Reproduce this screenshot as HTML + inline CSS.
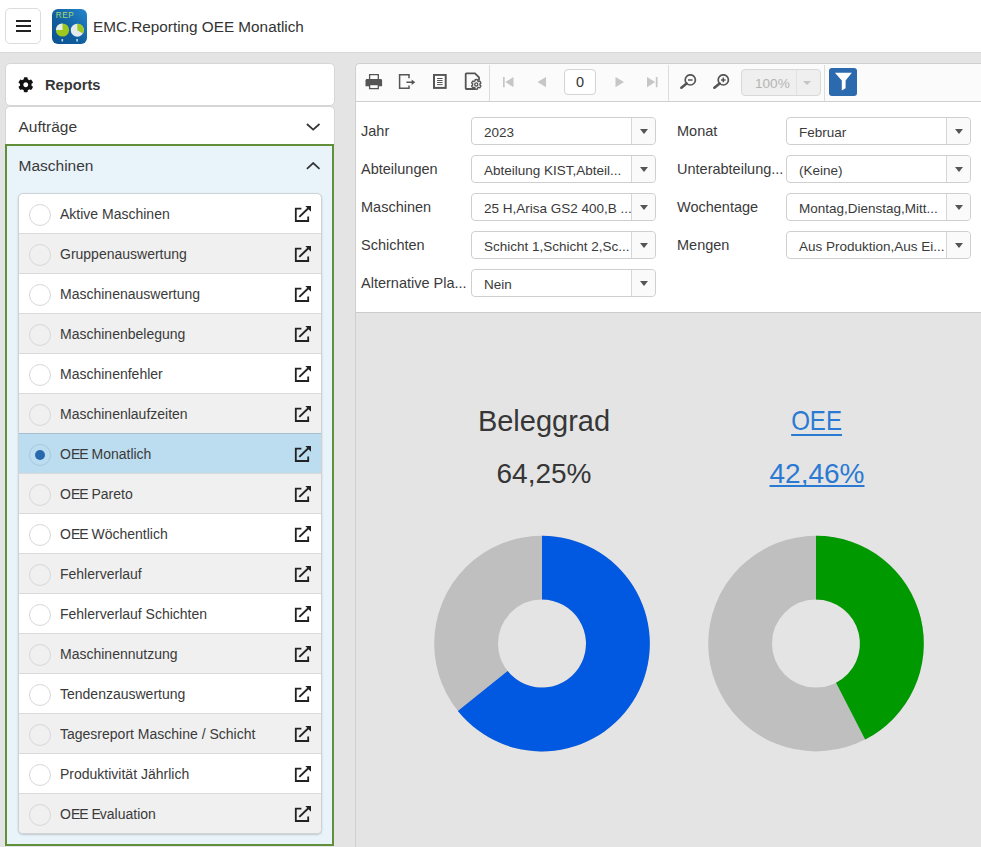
<!DOCTYPE html>
<html><head><meta charset="utf-8">
<style>
*{box-sizing:border-box;margin:0;padding:0}
html,body{width:981px;height:847px;overflow:hidden}
body{position:relative;background:#e4e4e4;font-family:"Liberation Sans",sans-serif;color:#333}
.abs{position:absolute}
#hdr{left:0;top:0;width:981px;height:53px;background:#fff;border-bottom:1px solid #d9d9d9}
#burger{left:5px;top:8px;width:36px;height:36px;border:1px solid #dcdcdc;border-radius:5px;background:#fff}
#burger i{position:absolute;left:10px;width:15px;height:2px;background:#222}
#logo{left:51.5px;top:8.7px;width:35px;height:35px;border-radius:6px;background:linear-gradient(225deg,#2386cc,#0f5c9c 60%,#0c5392)}
#title{left:93px;top:18px;font-size:15.3px;color:#333;white-space:nowrap}
.panel{background:#fff;border:1px solid #d6d6d6}
#rep{left:5px;top:63px;width:330px;height:43px;border-radius:5px}
#auf{left:5px;top:106px;width:330px;height:40px;border-radius:5px 5px 0 0}
#masch{left:5px;top:144px;width:329px;height:702px;border:2px solid #62903a;background:#e9f3fa}
#mgreenbot{display:none}
.ptxt{font-size:15.5px;color:#3a3a3a;white-space:nowrap}
#list{left:18px;top:193px;width:304px;height:641px;background:#fff;border:1px solid #cfd3d6;border-radius:5px;box-shadow:0 1px 2px rgba(0,0,0,.18);overflow:hidden}
.it{position:relative;height:40px;border-bottom:1px solid #dadada;font-size:14px;color:#3a3a3a;white-space:nowrap}
.it:nth-child(even){background:#f0f0f0}
.it.sel{background:#bcdcf0}
.it:last-child{border-bottom:0}
.rd{position:absolute;left:10px;top:10px;width:22px;height:22px;border:1.4px solid #d8d8d8;border-radius:50%}
.it.sel .rd{border-color:#a9c8dc}
.it.sel .rd:after{content:"";position:absolute;left:5px;top:5px;width:10px;height:10px;border-radius:50%;background:#2868ad}
.lt{position:absolute;left:41px;top:12.3px}
.e{letter-spacing:-1px}
.ext{position:absolute;left:275px;top:11px;width:18px;height:18px}
#rp{left:355px;top:63px;width:640px;height:800px;background:#e4e4e4;border-left:1px solid #cfcfcf;border-top:1px solid #cfcfcf;border-radius:5px 0 0 0;overflow:hidden}
#tb{left:0;top:0;width:640px;height:38px;background:#fbfbfb;border-bottom:1px solid #d0d0d0}
#form{left:0;top:38px;width:640px;height:211px;background:#fff;border-bottom:1px solid #cccccc}
.lbl{position:absolute;font-size:14.5px;color:#3a3a3a;white-space:nowrap}
.inp{position:absolute;width:185px;height:28px;border:1px solid #cfcfcf;border-radius:4px;background:#fff}
.inp span{position:absolute;left:12px;top:7px;font-size:13.5px;color:#3a3a3a;white-space:nowrap}
.inp b{position:absolute;right:0;top:0;width:24px;height:26px;border-left:1px solid #d6d6d6;background:#fafafa;border-radius:0 4px 4px 0}
.inp b:after{content:"";position:absolute;left:7.5px;top:11px;border-left:4.5px solid transparent;border-right:4.5px solid transparent;border-top:5px solid #555}
.sep{position:absolute;top:1px;width:1px;height:36px;background:#dcdcdc}
u{text-decoration-thickness:1.5px;text-decoration-skip-ink:none}
</style></head>
<body>
<div id="hdr" class="abs"></div>
<div id="burger" class="abs"><i style="top:11px"></i><i style="top:16px"></i><i style="top:21px"></i></div>
<div id="logo" class="abs">
<svg width="35" height="35" viewBox="0 0 35 35">
<text x="3.8" y="9" font-family="Liberation Sans" font-size="8.2" fill="#a6dc74" letter-spacing="0.6">REP</text>
<circle cx="10.5" cy="21" r="6.6" fill="#9dc91e"/>
<path d="M10.5 21 L3.9 21 A6.6 6.6 0 0 1 10.5 14.4Z" fill="#e8eef0"/>
<circle cx="25.3" cy="21.2" r="6.5" fill="#e2e8ec"/>
<path d="M25.3 21.2 L25.3 14.7 A6.5 6.5 0 0 1 30.9 24.5Z" fill="#9dc91e"/>
<rect x="9.5" y="30" width="1.6" height="2.5" fill="#bcd8f0"/>
<rect x="24.3" y="30" width="1.6" height="2.5" fill="#bcd8f0"/>
</svg>
</div>
<div id="title" class="abs">EMC.Reporting OEE Monatlich</div>

<div id="rep" class="abs panel">
<svg class="abs" style="left:12px;top:13px" width="15.5" height="15.5" viewBox="0 0 512 512"><path fill="#111" d="M487.4 315.7l-42.6-24.6c4.3-23.2 4.3-47 0-70.2l42.6-24.6c4.9-2.8 7.1-8.6 5.5-14-11.1-35.6-30-67.8-54.7-94.6-3.8-4.1-10-5.1-14.8-2.3L380.8 110c-17.9-15.4-38.5-27.3-60.8-35.1V25.8c0-5.6-3.9-10.5-9.4-11.7-36.7-8.2-74.3-7.8-109.2 0-5.5 1.2-9.4 6.1-9.4 11.7V75c-22.2 7.9-42.8 19.8-60.8 35.1L88.7 85.5c-4.9-2.8-11-1.9-14.8 2.3-24.7 26.7-43.6 58.9-54.7 94.6-1.7 5.4.6 11.2 5.5 14L67.3 221c-4.3 23.2-4.3 47 0 70.2l-42.6 24.6c-4.9 2.8-7.1 8.6-5.5 14 11.1 35.6 30 67.8 54.7 94.6 3.8 4.1 10 5.1 14.8 2.3l42.6-24.6c17.9 15.4 38.5 27.3 60.8 35.1v49.2c0 5.6 3.9 10.5 9.4 11.7 36.7 8.2 74.3 7.8 109.2 0 5.5-1.2 9.4-6.1 9.4-11.7v-49.2c22.2-7.9 42.8-19.8 60.8-35.1l42.6 24.6c4.9 2.8 11 1.9 14.8-2.3 24.7-26.7 43.6-58.9 54.7-94.6 1.5-5.5-.7-11.3-5.6-14.1zM256 336c-44.1 0-80-35.9-80-80s35.9-80 80-80 80 35.9 80 80-35.9 80-80 80z"/></svg>
<div class="abs" style="left:39px;top:13px;font-size:14.7px;font-weight:bold;color:#383838">Reports</div>
</div>
<div id="auf" class="abs panel">
<div class="abs ptxt" style="left:12.5px;top:11px">Aufträge</div>
<svg class="abs" style="left:300px;top:16px" width="15" height="9" viewBox="0 0 15 9"><path d="M0.9 1 L7.2 6.6 L13.5 1" fill="none" stroke="#333" stroke-width="1.7"/></svg>
</div>
<div id="masch" class="abs">
<div class="abs ptxt" style="left:11.5px;top:11.3px">Maschinen</div>
<svg class="abs" style="left:299px;top:16px" width="15" height="9" viewBox="0 0 15 9"><path d="M0.9 6.8 L7.2 1 L13.5 6.8" fill="none" stroke="#333" stroke-width="1.7"/></svg>
</div>
<div id="mgreenbot" class="abs"></div>

<div id="list" class="abs">
<div class="it"><div class="rd"></div><div class="lt">Aktive Maschinen</div><svg class="ext" viewBox="0 0 18 18"><path d="M7.4 3.6H1.8V16H14.2V11.4" fill="none" stroke="#222" stroke-width="1.8"/><path d="M5.3 11.9L14.3 3.3" stroke="#222" stroke-width="1.9"/><path d="M11.3 1.1H17V6.8Z" fill="#222"/></svg></div>
<div class="it"><div class="rd"></div><div class="lt">Gruppenauswertung</div><svg class="ext" viewBox="0 0 18 18"><path d="M7.4 3.6H1.8V16H14.2V11.4" fill="none" stroke="#222" stroke-width="1.8"/><path d="M5.3 11.9L14.3 3.3" stroke="#222" stroke-width="1.9"/><path d="M11.3 1.1H17V6.8Z" fill="#222"/></svg></div>
<div class="it"><div class="rd"></div><div class="lt">Maschinenauswertung</div><svg class="ext" viewBox="0 0 18 18"><path d="M7.4 3.6H1.8V16H14.2V11.4" fill="none" stroke="#222" stroke-width="1.8"/><path d="M5.3 11.9L14.3 3.3" stroke="#222" stroke-width="1.9"/><path d="M11.3 1.1H17V6.8Z" fill="#222"/></svg></div>
<div class="it"><div class="rd"></div><div class="lt">Maschinenbelegung</div><svg class="ext" viewBox="0 0 18 18"><path d="M7.4 3.6H1.8V16H14.2V11.4" fill="none" stroke="#222" stroke-width="1.8"/><path d="M5.3 11.9L14.3 3.3" stroke="#222" stroke-width="1.9"/><path d="M11.3 1.1H17V6.8Z" fill="#222"/></svg></div>
<div class="it"><div class="rd"></div><div class="lt">Maschinenfehler</div><svg class="ext" viewBox="0 0 18 18"><path d="M7.4 3.6H1.8V16H14.2V11.4" fill="none" stroke="#222" stroke-width="1.8"/><path d="M5.3 11.9L14.3 3.3" stroke="#222" stroke-width="1.9"/><path d="M11.3 1.1H17V6.8Z" fill="#222"/></svg></div>
<div class="it" style="border-bottom-color:#a6bfcf"><div class="rd"></div><div class="lt">Maschinenlaufzeiten</div><svg class="ext" viewBox="0 0 18 18"><path d="M7.4 3.6H1.8V16H14.2V11.4" fill="none" stroke="#222" stroke-width="1.8"/><path d="M5.3 11.9L14.3 3.3" stroke="#222" stroke-width="1.9"/><path d="M11.3 1.1H17V6.8Z" fill="#222"/></svg></div>
<div class="it sel"><div class="rd"></div><div class="lt">O<span class="e">E</span><span class="e">E</span> Monatlich</div><svg class="ext" viewBox="0 0 18 18"><path d="M7.4 3.6H1.8V16H14.2V11.4" fill="none" stroke="#222" stroke-width="1.8"/><path d="M5.3 11.9L14.3 3.3" stroke="#222" stroke-width="1.9"/><path d="M11.3 1.1H17V6.8Z" fill="#222"/></svg></div>
<div class="it"><div class="rd"></div><div class="lt">O<span class="e">E</span><span class="e">E</span> Pareto</div><svg class="ext" viewBox="0 0 18 18"><path d="M7.4 3.6H1.8V16H14.2V11.4" fill="none" stroke="#222" stroke-width="1.8"/><path d="M5.3 11.9L14.3 3.3" stroke="#222" stroke-width="1.9"/><path d="M11.3 1.1H17V6.8Z" fill="#222"/></svg></div>
<div class="it"><div class="rd"></div><div class="lt">O<span class="e">E</span><span class="e">E</span> Wöchentlich</div><svg class="ext" viewBox="0 0 18 18"><path d="M7.4 3.6H1.8V16H14.2V11.4" fill="none" stroke="#222" stroke-width="1.8"/><path d="M5.3 11.9L14.3 3.3" stroke="#222" stroke-width="1.9"/><path d="M11.3 1.1H17V6.8Z" fill="#222"/></svg></div>
<div class="it"><div class="rd"></div><div class="lt">Fehlerverlauf</div><svg class="ext" viewBox="0 0 18 18"><path d="M7.4 3.6H1.8V16H14.2V11.4" fill="none" stroke="#222" stroke-width="1.8"/><path d="M5.3 11.9L14.3 3.3" stroke="#222" stroke-width="1.9"/><path d="M11.3 1.1H17V6.8Z" fill="#222"/></svg></div>
<div class="it"><div class="rd"></div><div class="lt">Fehlerverlauf Schichten</div><svg class="ext" viewBox="0 0 18 18"><path d="M7.4 3.6H1.8V16H14.2V11.4" fill="none" stroke="#222" stroke-width="1.8"/><path d="M5.3 11.9L14.3 3.3" stroke="#222" stroke-width="1.9"/><path d="M11.3 1.1H17V6.8Z" fill="#222"/></svg></div>
<div class="it"><div class="rd"></div><div class="lt">Maschinennutzung</div><svg class="ext" viewBox="0 0 18 18"><path d="M7.4 3.6H1.8V16H14.2V11.4" fill="none" stroke="#222" stroke-width="1.8"/><path d="M5.3 11.9L14.3 3.3" stroke="#222" stroke-width="1.9"/><path d="M11.3 1.1H17V6.8Z" fill="#222"/></svg></div>
<div class="it"><div class="rd"></div><div class="lt">Tendenzauswertung</div><svg class="ext" viewBox="0 0 18 18"><path d="M7.4 3.6H1.8V16H14.2V11.4" fill="none" stroke="#222" stroke-width="1.8"/><path d="M5.3 11.9L14.3 3.3" stroke="#222" stroke-width="1.9"/><path d="M11.3 1.1H17V6.8Z" fill="#222"/></svg></div>
<div class="it"><div class="rd"></div><div class="lt">Tagesreport Maschine / Schicht</div><svg class="ext" viewBox="0 0 18 18"><path d="M7.4 3.6H1.8V16H14.2V11.4" fill="none" stroke="#222" stroke-width="1.8"/><path d="M5.3 11.9L14.3 3.3" stroke="#222" stroke-width="1.9"/><path d="M11.3 1.1H17V6.8Z" fill="#222"/></svg></div>
<div class="it"><div class="rd"></div><div class="lt">Produktivität Jährlich</div><svg class="ext" viewBox="0 0 18 18"><path d="M7.4 3.6H1.8V16H14.2V11.4" fill="none" stroke="#222" stroke-width="1.8"/><path d="M5.3 11.9L14.3 3.3" stroke="#222" stroke-width="1.9"/><path d="M11.3 1.1H17V6.8Z" fill="#222"/></svg></div>
<div class="it"><div class="rd"></div><div class="lt">O<span class="e">E</span><span class="e">E</span> <span class="e">E</span>valuation</div><svg class="ext" viewBox="0 0 18 18"><path d="M7.4 3.6H1.8V16H14.2V11.4" fill="none" stroke="#222" stroke-width="1.8"/><path d="M5.3 11.9L14.3 3.3" stroke="#222" stroke-width="1.9"/><path d="M11.3 1.1H17V6.8Z" fill="#222"/></svg></div>
</div>

<div id="rp" class="abs">
<div id="tb" class="abs">
<svg class="abs" style="left:9px;top:10px" width="18" height="16" viewBox="0 0 18 16"><rect x="4.6" y="0.6" width="8.7" height="6" fill="#fff" stroke="#555" stroke-width="1.3"/><path d="M2 5H15.6C16.5 5 17.1 5.6 17.1 6.5V12.3H0.5V6.5C0.5 5.6 1.1 5 2 5Z" fill="#555"/><rect x="4.6" y="10.6" width="8.7" height="4" fill="#fff" stroke="#555" stroke-width="1.3"/></svg>
<svg class="abs" style="left:42px;top:10px" width="18" height="16" viewBox="0 0 18 16"><path d="M11 4.3V0.8H1.6V14.2H11V11.4" fill="none" stroke="#555" stroke-width="1.5"/><path d="M8.4 8.3H14" stroke="#555" stroke-width="1.6"/><path d="M13.6 5.6L17.3 8.3L13.6 11Z" fill="#555"/></svg>
<svg class="abs" style="left:77px;top:10px" width="14" height="16" viewBox="0 0 14 16"><rect x="1" y="0.9" width="11.7" height="13" fill="#fff" stroke="#555" stroke-width="2"/><path d="M4.1 4.5H9.6M4.1 6.5H9.6M4.1 8.5H9.6M4.1 10.6H9.6" stroke="#555" stroke-width="1"/></svg>
<svg class="abs" style="left:108px;top:8px" width="20" height="20" viewBox="0 0 20 20"><path d="M11.5 17H2.4C2 17 1.7 16.7 1.7 16.3V2.1C1.7 1.7 2 1.4 2.4 1.4H11L15 5.3V8.5" fill="none" stroke="#555" stroke-width="1.8"/><g transform="translate(7.3 7.4) scale(0.0195)"><path d="M487.4 315.7l-42.6-24.6c4.3-23.2 4.3-47 0-70.2l42.6-24.6c4.9-2.8 7.1-8.6 5.5-14-11.1-35.6-30-67.8-54.7-94.6-3.8-4.1-10-5.1-14.8-2.3L380.8 110c-17.9-15.4-38.5-27.3-60.8-35.1V25.8c0-5.6-3.9-10.5-9.4-11.7-36.7-8.2-74.3-7.8-109.2 0-5.5 1.2-9.4 6.1-9.4 11.7V75c-22.2 7.9-42.8 19.8-60.8 35.1L88.7 85.5c-4.9-2.8-11-1.9-14.8 2.3-24.7 26.7-43.6 58.9-54.7 94.6-1.7 5.4.6 11.2 5.5 14L67.3 221c-4.3 23.2-4.3 47 0 70.2l-42.6 24.6c-4.9 2.8-7.1 8.6-5.5 14 11.1 35.6 30 67.8 54.7 94.6 3.8 4.1 10 5.1 14.8 2.3l42.6-24.6c17.9 15.4 38.5 27.3 60.8 35.1v49.2c0 5.6 3.9 10.5 9.4 11.7 36.7 8.2 74.3 7.8 109.2 0 5.5-1.2 9.4-6.1 9.4-11.7v-49.2c22.2-7.9 42.8-19.8 60.8-35.1l42.6 24.6c4.9 2.8 11 1.9 14.8-2.3 24.7-26.7 43.6-58.9 54.7-94.6 1.5-5.5-.7-11.3-5.6-14.1zM256 336c-44.1 0-80-35.9-80-80s35.9-80 80-80 80 35.9 80 80-35.9 80-80 80z" fill="#fff" stroke="#555" stroke-width="70"/></g></svg>
<div class="sep" style="left:133px"></div>
<svg class="abs" style="left:147px;top:12.5px" width="12" height="11" viewBox="0 0 12 11"><rect x="0" y="0" width="1.7" height="10.2" fill="#c6c6c6"/><path d="M10.5 0V10.2L2.3 5.1Z" fill="#c6c6c6"/></svg>
<svg class="abs" style="left:181px;top:12.5px" width="10" height="11" viewBox="0 0 10 11"><path d="M9 0V10.2L0.5 5.1Z" fill="#c6c6c6"/></svg>
<div class="abs" style="left:208px;top:5px;width:32px;height:25.5px;border:1px solid #d4d4d4;border-radius:4px;background:#fff;font-size:14.5px;color:#333;text-align:center;line-height:24px">0</div>
<svg class="abs" style="left:258.5px;top:12.5px" width="10" height="11" viewBox="0 0 10 11"><path d="M0.5 0V10.2L9 5.1Z" fill="#c6c6c6"/></svg>
<svg class="abs" style="left:290.5px;top:12.5px" width="12" height="11" viewBox="0 0 12 11"><path d="M0 0V10.2L8.2 5.1Z" fill="#c6c6c6"/><rect x="8.8" y="0" width="1.7" height="10.2" fill="#c6c6c6"/></svg>
<div class="sep" style="left:311.5px"></div>
<svg class="abs" style="left:324px;top:10px" width="18" height="16" viewBox="0 0 18 16"><circle cx="10.3" cy="5.9" r="5.1" fill="none" stroke="#555" stroke-width="1.7"/><path d="M8 5.9H12.6" stroke="#555" stroke-width="1.5"/><path d="M6.6 9.5L1.4 13.7" stroke="#555" stroke-width="2.6" stroke-linecap="round"/></svg>
<svg class="abs" style="left:357px;top:10px" width="18" height="16" viewBox="0 0 18 16"><circle cx="10.3" cy="5.9" r="5.1" fill="none" stroke="#555" stroke-width="1.7"/><path d="M8 5.9H12.6M10.3 3.6V8.2" stroke="#555" stroke-width="1.5"/><path d="M6.6 9.5L1.4 13.7" stroke="#555" stroke-width="2.6" stroke-linecap="round"/></svg>
<div class="abs" style="left:385px;top:5px;width:80px;height:26.5px;border:1px solid #d8d8d8;border-radius:4px;background:#efefef"><div class="abs" style="left:13px;top:5.5px;font-size:13.6px;color:#b4b4b4">100%</div><div class="abs" style="left:54px;top:0;width:1px;height:24.5px;background:#e2e2e2"></div><div class="abs" style="left:61px;top:11px;border-left:4.5px solid transparent;border-right:4.5px solid transparent;border-top:4px solid #c4c4c4"></div></div>
<div class="sep" style="left:468px"></div>
<div class="abs" style="left:473px;top:4px;width:28px;height:28px;border-radius:3px;background:#2b6aae"><svg class="abs" style="left:0;top:0" width="28" height="28" viewBox="0 0 28 28"><path d="M5.9 4.7H22.9L16.6 12.6V20.2L12.8 22.6V12.6Z" fill="#fff"/></svg></div>
</div>
<div id="form" class="abs">
<div class="lbl" style="left:5px;top:21px">Jahr</div><div class="inp" style="left:115px;top:15px"><span>2023</span><b></b></div>
<div class="lbl" style="left:321px;top:21px">Monat</div><div class="inp" style="left:430px;top:15px"><span>Februar</span><b></b></div>
<div class="lbl" style="left:5px;top:59px">Abteilungen</div><div class="inp" style="left:115px;top:53px"><span>Abteilung KIST,Abteil...</span><b></b></div>
<div class="lbl" style="left:321px;top:59px">Unterabteilung...</div><div class="inp" style="left:430px;top:53px"><span>(Keine)</span><b></b></div>
<div class="lbl" style="left:5px;top:97px">Maschinen</div><div class="inp" style="left:115px;top:91px"><span>25 H,Arisa GS2 400,B ...</span><b></b></div>
<div class="lbl" style="left:321px;top:97px">Wochentage</div><div class="inp" style="left:430px;top:91px"><span>Montag,Dienstag,Mitt...</span><b></b></div>
<div class="lbl" style="left:5px;top:135px">Schichten</div><div class="inp" style="left:115px;top:129px"><span>Schicht 1,Schicht 2,Sc...</span><b></b></div>
<div class="lbl" style="left:321px;top:135px">Mengen</div><div class="inp" style="left:430px;top:129px"><span>Aus Produktion,Aus Ei...</span><b></b></div>
<div class="lbl" style="left:5px;top:173px">Alternative Pla...</div><div class="inp" style="left:115px;top:167px"><span>Nein</span><b></b></div>
</div>
<svg class="abs" style="left:0;top:250px" width="640" height="550" viewBox="0 250 640 550">
<circle cx="186" cy="579.6" r="75.9" fill="none" stroke="#bfbfbf" stroke-width="63.8"/><path d="M186 471.8 A107.8 107.8 0 1 1 101.87 647.00 L151.66 607.11 A44 44 0 1 0 186 535.6Z" fill="#0059e0"/>
<circle cx="460" cy="579.6" r="75.9" fill="none" stroke="#bfbfbf" stroke-width="63.8"/><path d="M460 471.8 A107.8 107.8 0 0 1 509.18 675.53 L480.07 618.75 A44 44 0 0 0 460 535.6Z" fill="#009900"/>
</svg>
<div class="abs" style="left:88px;top:341px;width:200px;text-align:center;font-size:29px;color:#363636">Beleggrad</div>
<div class="abs" style="left:88px;top:393.5px;width:200px;text-align:center;font-size:28px;color:#363636">64,25%</div>
<div class="abs" style="left:361px;top:340.5px;width:200px;text-align:center;font-size:28px;color:#2a7ad3"><u style="display:inline-block;transform:scaleX(0.86);text-underline-offset:3.5px">OEE</u></div>
<div class="abs" style="left:361px;top:393.5px;width:200px;text-align:center;font-size:28px;color:#2a7ad3"><u style="text-underline-offset:2px">42,46%</u></div>
</div>
</body></html>
